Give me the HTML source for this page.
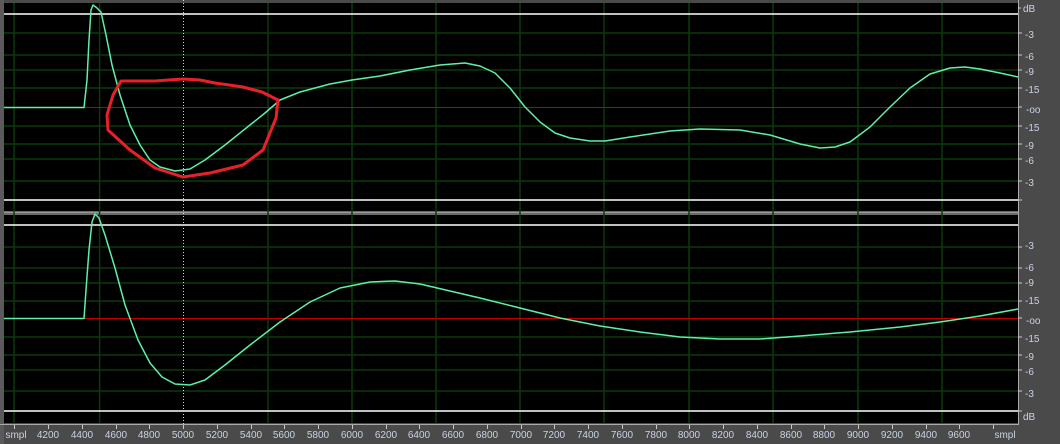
<!DOCTYPE html>
<html><head><style>
html,body{margin:0;padding:0;background:#4a4a4a;width:1060px;height:444px;overflow:hidden}
svg{display:block}
text{font-family:"Liberation Sans",sans-serif;font-size:10px;fill:#c8d2e4}
</style></head><body>
<svg width="1060" height="444" viewBox="0 0 1060 444" xmlns="http://www.w3.org/2000/svg">
<rect x="0" y="0" width="1060" height="444" fill="#4a4a4a"/>
<rect x="4" y="3" width="1014" height="208" fill="#000"/>
<rect x="4" y="215" width="1014" height="208" fill="#000"/>
<rect x="0" y="211" width="1018" height="4" fill="#6a6a6a"/>
<rect x="0" y="212" width="1018" height="1" fill="#999"/>
<rect x="0" y="0" width="4" height="444" fill="#5a5a5a"/>
<line x1="1018.5" y1="0" x2="1018.5" y2="425" stroke="#aaa"/>
<line x1="0" y1="424.5" x2="1018" y2="424.5" stroke="#aaa"/>
<g stroke="#0b3a0b" stroke-width="1.5">
<path d="M4 33H1018M4 55H1018M4 70H1018M4 88H1018M4 126H1018M4 144H1018M4 159H1018M4 181H1018"/>
<path d="M4 247H1018M4 268H1018M4 283H1018M4 301H1018M4 337H1018M4 355H1018M4 370H1018M4 391H1018"/>
<path d="M14 3V423M99.6 3V423M268 3V423M352 3V423M436 3V423M520 3V423M604 3V423M689 3V423M773 3V423M858 3V423M942 3V423"/>
</g>
<g stroke="#fff" stroke-width="1.5">
<path d="M4 14H1018M4 200H1018M4 225H1018M4 411H1018"/>
</g>
<g stroke="#c00000" stroke-width="1">
<path d="M4 107.5H1018M4 318.5H1018"/>
</g>
<line x1="183.5" y1="0" x2="183.5" y2="425" stroke="#e8e850" stroke-dasharray="1,2"/>
<g fill="none" stroke="#5ef0a8" stroke-width="1.5" stroke-linejoin="round">
<path d="M4 107.5H84L87 80L89 40L91 10L93 5L97 8L101 12L106 35L112 65L120 95L130 125L140 145L150 160L160 167L175 171L183 170L190 169L205 160L225 145L250 125L265 113L280 100L300 92L330 84L352 80L380 76L410 70L440 65L465 63L480 66L495 73L510 88L525 107L540 122L555 133L570 138L590 141L605 141L630 137L670 131L700 129L740 130L770 135L800 144L820 148L835 147L850 142L870 127L890 107L910 88L930 74L950 68L965 67L980 69L1000 73L1018 77"/>
<path d="M4 318.5H84L86 290L89 250L92 222L95 214L99 218L105 235L115 268L125 305L138 340L150 363L162 377L175 384L190 385L205 380L225 365L250 345L280 322L310 302L340 288L370 282L395 281L420 284L450 291L480 298L520 308L560 318L600 326L640 332L680 337L720 339L760 339L800 336L850 332L900 327L940 322L980 316L1018 309"/>
</g>
<path d="M121 81L155 81L183 79L200 80L215 83L243 87L262 92L278 100L276 118L263 150L243 165L210 173L183 177L155 168L130 150L108 130L107 115L113 95Z" fill="none" stroke="#e8202a" stroke-width="3" stroke-linejoin="round"/>
<g text-anchor="start">
<text x="1023" y="12">dB</text>
<text x="1025" y="38">-3</text>
<text x="1025" y="60">-6</text>
<text x="1025" y="75">-9</text>
<text x="1025" y="93">-15</text>
<text x="1026" y="113">-oo</text>
<text x="1025" y="131">-15</text>
<text x="1025" y="149">-9</text>
<text x="1025" y="164">-6</text>
<text x="1025" y="186">-3</text>
<text x="1025" y="249">-3</text>
<text x="1025" y="271">-6</text>
<text x="1025" y="286">-9</text>
<text x="1025" y="304">-15</text>
<text x="1026" y="324">-oo</text>
<text x="1025" y="342">-15</text>
<text x="1025" y="360">-9</text>
<text x="1025" y="375">-6</text>
<text x="1025" y="397">-3</text>
<text x="1023" y="420">dB</text>
</g>
<g stroke="#c8c8c8" stroke-width="1">
<path d="M1018 8h3M1018 33h4M1018 55h4M1018 70h4M1018 88h4M1018 107h4M1018 126h4M1018 144h4M1018 159h4M1018 181h4M1018 200h4M1018 247h4M1018 268h4M1018 283h4M1018 301h4M1018 318h4M1018 337h4M1018 355h4M1018 370h4M1018 391h4M1018 411h4"/>
<path d="M14.5 425v4M48.5 425v4M82.5 425v4M116.5 425v4M149.5 425v4M183.5 425v4M217.5 425v4M251.5 425v4M284.5 425v4M318.5 425v4M352.5 425v4M386.5 425v4M419.5 425v4M453.5 425v4M487.5 425v4M521.5 425v4M554.5 425v4M588.5 425v4M622.5 425v4M656.5 425v4M689.5 425v4M723.5 425v4M757.5 425v4M791.5 425v4M824.5 425v4M858.5 425v4M892.5 425v4M926.5 425v4M959.5 425v4M993.5 425v4"/>
</g>
<g text-anchor="middle">
<text x="16" y="438">smpl</text>
<text x="48" y="438">4200</text>
<text x="82" y="438">4400</text>
<text x="116" y="438">4600</text>
<text x="149" y="438">4800</text>
<text x="183" y="438">5000</text>
<text x="217" y="438">5200</text>
<text x="251" y="438">5400</text>
<text x="284" y="438">5600</text>
<text x="318" y="438">5800</text>
<text x="352" y="438">6000</text>
<text x="386" y="438">6200</text>
<text x="419" y="438">6400</text>
<text x="453" y="438">6600</text>
<text x="487" y="438">6800</text>
<text x="521" y="438">7000</text>
<text x="554" y="438">7200</text>
<text x="588" y="438">7400</text>
<text x="622" y="438">7600</text>
<text x="656" y="438">7800</text>
<text x="689" y="438">8000</text>
<text x="723" y="438">8200</text>
<text x="757" y="438">8400</text>
<text x="791" y="438">8600</text>
<text x="824" y="438">8800</text>
<text x="858" y="438">9000</text>
<text x="892" y="438">9200</text>
<text x="926" y="438">9400</text>
<text x="959" y="438">9600</text>
<text x="1005" y="438">smpl</text>
</g>
</svg>
</body></html>
